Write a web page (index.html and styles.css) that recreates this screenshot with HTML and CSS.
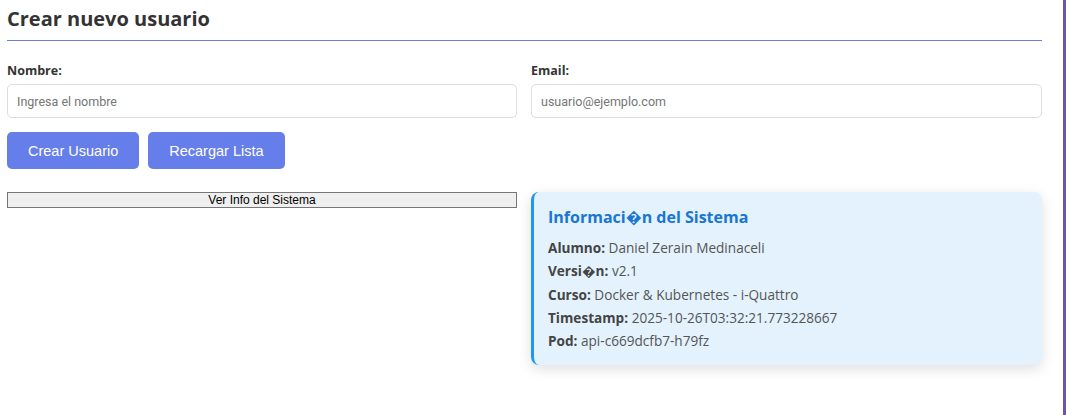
FILE: index.html
```html
<!DOCTYPE html>
<html lang="es">
<head>
<meta charset="utf-8">
<title>Crear nuevo usuario</title>
<link rel="stylesheet" href="styles.css">
</head>
<body>
<div class="page">
  <main class="panel">
    <h2 class="title">Crear nuevo usuario</h2>
    <div class="form-grid">
      <div class="field">
        <label class="label" for="nombre">Nombre:</label>
        <input class="input" id="nombre" type="text" placeholder="Ingresa el nombre">
      </div>
      <div class="field">
        <label class="label" for="email">Email:</label>
        <input class="input" id="email" type="email" placeholder="usuario@ejemplo.com">
      </div>
    </div>
    <div class="actions">
      <button class="btn">Crear Usuario</button>
      <button class="btn">Recargar Lista</button>
    </div>
    <div class="info-grid">
      <div><button class="plain-btn">Ver Info del Sistema</button></div>
      <section class="info-card">
        <h3 class="info-title">Informaci&#xFFFD;n del Sistema</h3>
        <p class="info-line"><strong>Alumno:</strong> Daniel Zerain Medinaceli</p>
        <p class="info-line"><strong>Versi&#xFFFD;n:</strong> v2.1</p>
        <p class="info-line"><strong>Curso:</strong> Docker &amp; Kubernetes - i-Quattro</p>
        <p class="info-line"><strong>Timestamp:</strong> 2025-10-26T03:32:21.773228667</p>
        <p class="info-line"><strong>Pod:</strong> api-c669dcfb7-h79fz</p>
      </section>
    </div>
  </main>
  <div class="edge"></div>
</div>
</body>
</html>
```
FILE: styles.css
```css
* { box-sizing: border-box; }
html, body { margin: 0; padding: 0; background: #fff; }
body { font-family: "Open Sans", "Noto Sans", "DejaVu Sans", sans-serif; color: #333; }

.page {
  display: flex;
  min-height: 415px;
}
.panel {
  width: 1063px;
  padding: 0 21px 0 7px;
}
.edge {
  width: 3px;
  background: #6a56b2;
}

.title {
  margin: 0;
  padding: 6px 0 9px;
  font-size: 20px;
  font-weight: 700;
  color: #333;
  line-height: 25px;
  border-bottom: 1px solid #6f7fd8;
}

.form-grid {
  display: grid;
  grid-template-columns: 510px 511px;
  column-gap: 14px;
  margin-top: 21px;
}
.field { display: flex; flex-direction: column; }
.label {
  font-size: 12.5px;
  font-weight: 700;
  color: #333;
  line-height: 18px;
  margin-bottom: 4px;
}
.input {
  height: 34px;
  border: 1px solid #ddd;
  border-radius: 5px;
  padding: 0 9px;
  font-family: Roboto, "Liberation Sans", Arial, sans-serif;
  font-size: 12.5px;
  color: #333;
  background: #fff;
}
.input::placeholder { color: #757575; }

.actions {
  display: flex;
  gap: 9px;
  margin-top: 14px;
}
.btn {
  height: 37px;
  padding: 0 21px;
  border: 0;
  border-radius: 5px;
  background: #667eea;
  color: #fff;
  font-family: "Liberation Sans", Arial, sans-serif;
  font-size: 14.5px;
}

.info-grid {
  display: grid;
  grid-template-columns: 510px 511px;
  column-gap: 14px;
  margin-top: 23px;
  align-items: start;
}
.plain-btn {
  display: block;
  width: 100%;
  height: 16px;
  padding: 0 6px;
  border: 1px solid #767676;
  border-radius: 0;
  background: #efefef;
  color: #000;
  font-family: "Liberation Sans", Arial, sans-serif;
  font-size: 12px;
  line-height: 14px;
}

.info-card {
  background: #e3f2fd;
  border-left: 3px solid #2196f3;
  border-radius: 8px;
  padding: 13px 14px 13px 14px;
  box-shadow: 0 4px 14px rgba(0, 0, 0, 0.13);
  height: 173px;
}
.info-title {
  margin: 0 0 7px;
  font-size: 16px;
  font-weight: 700;
  color: #1976d2;
  line-height: 24px;
}
.info-line {
  margin: 0;
  font-size: 13.6px;
  line-height: 23.25px;
  color: #555;
}
.info-line strong { color: #444; }
```
